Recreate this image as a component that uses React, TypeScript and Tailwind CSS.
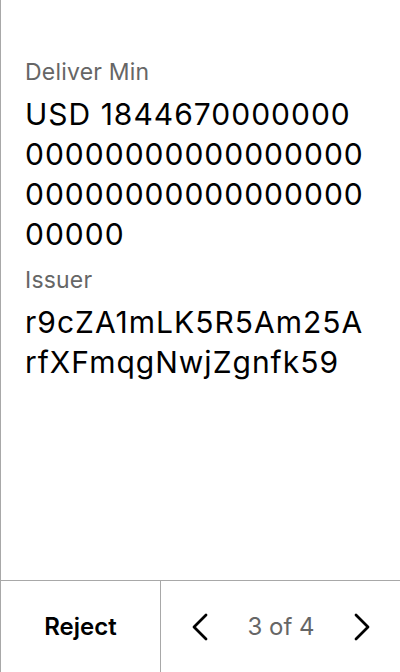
const fields = [
  {
    label: "Deliver Min",
    lines: ["USD 1844670000000", "00000000000000000", "00000000000000000", "00000"],
  },
  { label: "Issuer", lines: ["r9cZA1mLK5R5Am25A", "rfXFmqgNwjZgnfk59"] },
];

function Chevron({ dir }: { dir: "left" | "right" }) {
  return (
    <svg width="16" height="28" viewBox="0 0 16 28" fill="none" stroke="black" strokeWidth="2.8" strokeLinecap="round" strokeLinejoin="round">
      {dir === "left" ? <polyline points="14,2 2,14 14,26" /> : <polyline points="2,2 14,14 2,26" />}
    </svg>
  );
}

export default function App() {
  return (
    <div className="h-[672px] w-[400px] bg-white flex flex-col border-l border-[#a8a8a8] font-['Inter',sans-serif] text-black">
      {/* Details */}
      <div className="flex-1 px-6 pt-[58px]">
        {fields.map((f) => (
          <div key={f.label} className="mb-3">
            <p className="text-[23px] leading-[28px] tracking-[0.2px] text-[#666666]">{f.label}</p>
            <div className="mt-2 text-[30px] leading-[40px] tracking-[1px]">
              {f.lines.map((line, i) => (
                <p key={i} className="whitespace-nowrap">
                  {line}
                </p>
              ))}
            </div>
          </div>
        ))}
      </div>

      {/* Footer */}
      <div className="h-[92px] flex border-t border-[#a8a8a8]">
        <button className="w-[160px] border-r border-[#a8a8a8] flex items-center justify-center text-[24px] font-semibold">
          Reject
        </button>
        <div className="flex-1 flex items-center justify-between pl-[31px] pr-[30px]">
          <Chevron dir="left" />
          <span className="text-[24px] text-[#666666]">3 of 4</span>
          <Chevron dir="right" />
        </div>
      </div>
    </div>
  );
}
